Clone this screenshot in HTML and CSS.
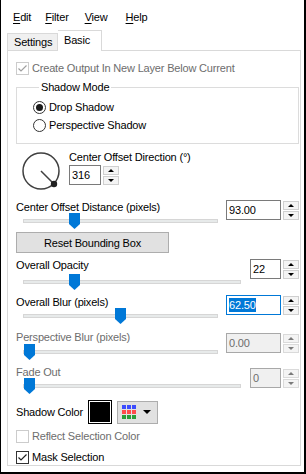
FILE: index.html
```html
<!DOCTYPE html>
<html>
<head>
<meta charset="utf-8">
<link rel="stylesheet" href="styles.css">
</head>
<body>
<div class="win">
  <nav class="menubar">
    <span class="mi"><u>E</u>dit</span>
    <span class="mi"><u>F</u>ilter</span>
    <span class="mi"><u>V</u>iew</span>
    <span class="mi"><u>H</u>elp</span>
  </nav>
  <div class="tabs">
    <div class="tab">Settings</div>
    <div class="tab active">Basic</div>
  </div>
  <div class="panel">
    <div class="chk dis r-create">
      <span class="box"><svg width="11" height="11" viewBox="0 0 11 11"><polyline points="1.5,5.5 4,8 9.5,2.5" fill="none" stroke="#a0a0a0" stroke-width="1.2"/></svg></span>
      <span>Create Output In New Layer Below Current</span>
    </div>
    <fieldset class="group">
      <legend>Shadow Mode</legend>
      <div class="radio"><span class="rb on"></span><span>Drop Shadow</span></div>
      <div class="radio"><span class="rb"></span><span>Perspective Shadow</span></div>
    </fieldset>
    <div class="dirrow">
      <svg class="dial" width="40" height="40" viewBox="0 0 40 40">
        <circle cx="19" cy="19" r="18" fill="none" stroke="#404040" stroke-width="1.5"/>
        <line x1="19" y1="19" x2="32" y2="32" stroke="#404040" stroke-width="1.5"/>
        <circle cx="32" cy="32" r="3.2" fill="#202020"/>
      </svg>
      <div class="dircol">
        <div class="lbl">Center Offset Direction (°)</div>
        <div class="spin">
          <div class="edit e32">316</div>
          <div class="arrows"><span class="ab"><i class="up"></i></span><span class="ab"><i class="dn"></i></span></div>
        </div>
      </div>
    </div>
    <div class="srow r-dist">
      <div class="sl">
        <div class="lbl">Center Offset Distance (pixels)</div>
        <div class="track t195"><span class="thumb" style="left:45px"></span></div>
      </div>
      <div class="spin">
        <div class="edit e55">93.00</div>
        <div class="arrows"><span class="ab"><i class="up"></i></span><span class="ab"><i class="dn"></i></span></div>
      </div>
    </div>
    <div class="btnrow"><button class="btn">Reset Bounding Box</button></div>
    <div class="srow r-opa">
      <div class="sl">
        <div class="lbl">Overall Opacity</div>
        <div class="track t218"><span class="thumb" style="left:45px"></span></div>
      </div>
      <div class="spin">
        <div class="edit e31">22</div>
        <div class="arrows"><span class="ab"><i class="up"></i></span><span class="ab"><i class="dn"></i></span></div>
      </div>
    </div>
    <div class="srow r-blur">
      <div class="sl">
        <div class="lbl">Overall Blur (pixels)</div>
        <div class="track t195"><span class="thumb" style="left:91px"></span></div>
      </div>
      <div class="spin">
        <div class="edit e55 focus"><span class="sel">62.50</span></div>
        <div class="arrows"><span class="ab"><i class="up"></i></span><span class="ab"><i class="dn"></i></span></div>
      </div>
    </div>
    <div class="srow r-persp dis">
      <div class="sl">
        <div class="lbl">Perspective Blur (pixels)</div>
        <div class="track t195"><span class="thumb" style="left:0px"></span></div>
      </div>
      <div class="spin">
        <div class="edit e55">0.00</div>
        <div class="arrows"><span class="ab"><i class="up"></i></span><span class="ab"><i class="dn"></i></span></div>
      </div>
    </div>
    <div class="srow r-fade dis">
      <div class="sl">
        <div class="lbl">Fade Out</div>
        <div class="track t218"><span class="thumb" style="left:0px"></span></div>
      </div>
      <div class="spin">
        <div class="edit e31">0</div>
        <div class="arrows"><span class="ab"><i class="up"></i></span><span class="ab"><i class="dn"></i></span></div>
      </div>
    </div>
    <div class="colorrow">
      <span class="lbl">Shadow Color</span>
      <span class="swatch"></span>
      <span class="palbtn">
        <span class="pal">
          <i class="pb"></i><i class="pb"></i><i class="pb"></i>
          <i class="pr"></i><i class="pr"></i><i class="pr"></i>
          <i class="pg"></i><i class="pg"></i><i class="pg"></i>
        </span>
        <i class="dn caret"></i>
      </span>
    </div>
    <div class="chk dis r-reflect">
      <span class="box"></span>
      <span>Reflect Selection Color</span>
    </div>
    <div class="chk r-mask">
      <span class="box"><svg width="11" height="11" viewBox="0 0 11 11"><polyline points="1.5,5.5 4,8 9.5,2.5" fill="none" stroke="#202020" stroke-width="1.2"/></svg></span>
      <span>Mask Selection</span>
    </div>
  </div>
</div>
</body>
</html>
```

FILE: styles.css
```css
* { box-sizing: border-box; }
html, body { margin: 0; padding: 0; background: #fff; }
body {
  font-family: "Liberation Sans", Arial, sans-serif;
  font-size: 11px;
  letter-spacing: -0.18px;
  color: #000;
}
.win {
  width: 306px;
  height: 474px;
  border-left: 1px solid #000;
  border-right: 2px solid #000;
  border-bottom: 2px solid #000;
  background: #fff;
  overflow: hidden;
}
.menubar {
  display: flex;
  height: 30px;
  padding: 9px 0 0 5px;
  line-height: 16px;
}
.mi { padding: 0 7px; }
.mi:nth-child(3) { margin-left: 2px; }
.mi:nth-child(4) { margin-left: 4px; }
.mi u { text-decoration: underline; text-underline-offset: 2px; }

.tabs {
  display: flex;
  align-items: flex-end;
  height: 20px;
  padding-left: 6px;
  position: relative;
  z-index: 2;
}
.tab {
  height: 17px;
  line-height: 16px;
  padding: 0 6px;
  background: #f0f0f0;
  border: 1px solid #d9d9d9;
  border-bottom: none;
  width: 51px;
}
.tab.active {
  height: 21px;
  margin-bottom: -1px;
  background: #fff;
  border-left: none;
  width: 44px;
  padding: 1px 7px 0 6px;
}
.panel {
  margin-left: 6px;
  width: 294px;
  height: 416px;
  border: 1px solid #d9d9d9;
  padding: 9px 1px 0 8px;
  display: flex;
  flex-direction: column;
}
.lbl { line-height: 16px; white-space: nowrap; }

.chk { display: flex; align-items: center; height: 16px; gap: 3px; }
.chk .box {
  width: 13px; height: 13px;
  border: 1px solid #333;
  background: #fff;
  display: flex; align-items: center; justify-content: center;
}
.chk.dis { color: #6d6d6d; }
.chk.dis .box { border-color: #cccccc; }

.group {
  margin: 3px 0 0 0;
  padding: 4px 0 8px 16px;
  border: 1px solid #dcdcdc;
  min-width: 0;
  width: 283px;
}
.group legend { padding: 0 2px; margin-left: 6px; line-height: 16px; }
.radio { display: flex; align-items: center; gap: 3px; height: 16px; margin-bottom: 2px; }
.rb {
  width: 13px; height: 13px; border-radius: 50%;
  border: 1px solid #333; background: #fff;
  display: flex; align-items: center; justify-content: center;
}
.rb.on::after { content: ""; width: 7px; height: 7px; border-radius: 50%; background: #1a1a1a; }

.dirrow { display: flex; margin-top: 5px; height: 44px; }
.dial { margin: 3px 0 0 6px; }
.dircol { margin-left: 7px; display: flex; flex-direction: column; }

.spin { display: flex; gap: 2px; }
.edit {
  height: 20px;
  border: 1px solid #7a7a7a;
  padding-left: 2px;
  line-height: 18px;
  background: #fff;
}
.e32 { width: 32px; }
.e31 { width: 31px; }
.e55 { width: 55px; }
.edit.focus { border-color: #0078d7; }
.sel { background: #0078d7; color: #fff; display: inline-block; line-height: 14px; }
.arrows { display: flex; flex-direction: column; gap: 1px; width: 16px; padding-top: 1px; }
.ab {
  height: 9px;
  border: 1px solid #cfcfcf;
  background: #f4f4f4;
  display: flex; align-items: center; justify-content: center;
}
i.up, i.dn { display: block; width: 0; height: 0; border-left: 3px solid transparent; border-right: 3px solid transparent; }
i.up { border-bottom: 3px solid #000; }
i.dn { border-top: 3px solid #000; }

.srow { display: flex; justify-content: space-between; align-items: flex-start; }
.sl { display: flex; flex-direction: column; }
.track {
  position: relative;
  margin-left: 7px;
  height: 4px;
  background: #e7eaea;
  border: 1px solid #d6d6d6;
}
.t195 { width: 195px; }
.t218 { width: 218px; }
.thumb {
  position: absolute;
  top: -7px;
  width: 11px;
  height: 16px;
  background: #0078d7;
  clip-path: polygon(0 0, 100% 0, 100% 68%, 50% 100%, 0 68%);
}
.r-dist { margin-top: 6px; }
.r-dist .track { margin-top: 4px; }
.r-dist .spin { margin-top: 1px; }
.btnrow { margin-top: 9px; height: 21px; }
.btn {
  width: 153px; height: 21px;
  font: inherit;
  letter-spacing: inherit;
  background: #e1e1e1;
  border: 1px solid #adadad;
  padding: 0;
  display: block;
}
.r-opa { margin-top: 4px; }
.r-opa .track { margin-top: 7px; }
.r-opa .spin { margin-top: 2px; }
.r-blur { margin-top: 10px; }
.r-blur .track { margin-top: 4px; }
.r-blur .spin { margin-top: 1px; }
.r-persp { margin-top: 11px; }
.r-persp .track { margin-top: 5px; }
.r-persp .spin { margin-top: 4px; }
.r-fade { margin-top: 10px; }
.r-fade .track { margin-top: 4px; }
.r-fade .spin { margin-top: 4px; }
.dis .lbl, .dis .edit { color: #6d6d6d; }
.dis .edit { background: #f0f0f0; border-color: #a8a8a8; }
.dis .ab { border-color: #dadada; }
.dis i.up { border-bottom-color: #7a7a7a; }
.dis i.dn { border-top-color: #7a7a7a; }

.colorrow { display: flex; align-items: center; margin-top: 12px; height: 24px; }
.colorrow .lbl { width: 72px; }
.swatch {
  width: 24px; height: 24px;
  background: #000;
  border: 1px solid #000;
  box-shadow: inset 0 0 0 1px #fff;
}
.palbtn {
  margin-left: 5px;
  width: 41px; height: 23px;
  background: #e1e1e1;
  border: 1px solid #adadad;
  display: flex; align-items: center; padding-left: 4px; gap: 7px;
}
.pal { display: grid; grid-template-columns: repeat(3, 4px); grid-template-rows: repeat(3, 4px); gap: 1px; }
.pal i { display: block; }
.pb { background: #3c4cff; }
.pr { background: #ff4b4b; }
.pg { background: #2a9d3a; }
.caret { border-left-width: 4px !important; border-right-width: 4px !important; border-top-width: 4px !important; }

.r-reflect { margin-top: 4px; }
.r-mask { margin-top: 5px; }
```
